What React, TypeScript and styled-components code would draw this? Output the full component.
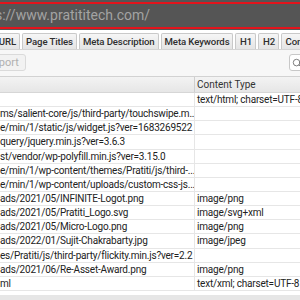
import React from "react";
import styled, { createGlobalStyle } from "styled-components";
import { Search } from "lucide-react";

const GlobalStyle = createGlobalStyle`
  html, body { margin: 0; padding: 0; background: #ffffff; overflow: hidden; }
  * { box-sizing: border-box; }
`;

const Frame = styled.div`
  width: 300px;
  height: 300px;
  overflow: hidden;
  display: flex;
  flex-direction: column;
  font-family: Roboto, "Liberation Sans", Arial, sans-serif;
  background: #ffffff;
`;

const AddressBar = styled.div`
  height: 30px;
  flex: none;
  background: #555555;
  padding: 2px 0 1px;
`;

const AddressInner = styled.div`
  height: 27px;
  border-top: 2px solid #e3141c;
  border-bottom: 2px solid #e3141c;
  color: #a3a3a3;
  font-size: 14px;
  line-height: 23px;
  white-space: nowrap;
  overflow: hidden;
`;

const AddressText = styled.span`
  display: inline-block;
  margin-left: -5px;
`;

const TabStrip = styled.div`
  height: 20px;
  flex: none;
  display: flex;
  align-items: flex-end;
  gap: 2px;
  padding-top: 3px;
  background: #ffffff;
  border-bottom: 1px solid #d4d4d4;
  white-space: nowrap;
`;

const Tab = styled.div<{ $first?: boolean }>`
  height: 16px;
  flex: none;
  min-width: 21px;
  text-align: center;
  ${(p) => (p.$first ? "width: 40px; margin-left: -20px; text-align: right;" : "")}
  padding: 0 3px;
  border: 1px solid #c9c9c9;
  border-bottom: none;
  border-radius: 2px 2px 0 0;
  background: linear-gradient(#f6f6f6, #e4e4e4);
  color: #2e2e2e;
  font-size: 9.6px;
  font-weight: 500;
  letter-spacing: -0.1px;
  line-height: 15px;
`;

const Toolbar = styled.div`
  height: 26px;
  flex: none;
  display: flex;
  align-items: flex-start;
  justify-content: space-between;
  padding-top: 4px;
  background: #f7f7f7;
`;

const ExportButton = styled.div`
  height: 17px;
  margin-left: -20px;
  padding: 0 6px;
  border: 1px solid #dadada;
  border-radius: 3px;
  background: #f2f2f2;
  color: #b0b0b0;
  font-size: 11px;
  line-height: 15px;
`;

const SearchBox = styled.div`
  width: 40px;
  height: 17px;
  margin-right: -29px;
  border: 1px solid #c8c8c8;
  border-radius: 3px;
  background: #ffffff;
  display: flex;
  align-items: center;
  padding-left: 2px;
  color: #666666;
`;

const HeaderRow = styled.div`
  height: 17px;
  flex: none;
  display: grid;
  grid-template-columns: 195px 1fr;
  border-top: 1px solid #d2d2d2;
  border-bottom: 1px solid #d6d6d6;
  background: linear-gradient(#f3f3f3, #e6e6e6);
`;

const HeaderCell = styled.div<{ $divider?: boolean }>`
  color: #333333;
  font-size: 10px;
  line-height: 15px;
  padding-left: 2px;
  border-right: ${(p) => (p.$divider ? "1px solid #cfcfcf" : "none")};
`;

const Row = styled.div`
  height: 14.15px;
  flex: none;
  display: grid;
  grid-template-columns: 195px 1fr;
  border-bottom: 1px solid #e6e6e6;
`;

const Cell = styled.div<{ $divider?: boolean }>`
  overflow: hidden;
  white-space: nowrap;
  color: #222222;
  font-size: 10px;
  letter-spacing: -0.2px;
  line-height: 13px;
  padding-left: ${(p) => (p.$divider ? "0" : "2px")};
  border-right: ${(p) => (p.$divider ? "1px solid #e6e6e6" : "none")};
`;

const BottomBar = styled.div`
  flex: 1;
  margin-top: 4px;
  background: #e6e6e6;
`;

const rows: [string, string][] = [
  ["", "text/html; charset=UTF-8"],
  ["ms/salient-core/js/third-party/touchswipe.m...", ""],
  ["e/min/1/static/js/widget.js?ver=1683269522", ""],
  ["query/jquery.min.js?ver=3.6.3", ""],
  ["st/vendor/wp-polyfill.min.js?ver=3.15.0", ""],
  ["e/min/1/wp-content/themes/Pratiti/js/third-...", ""],
  ["e/min/1/wp-content/uploads/custom-css-js...", ""],
  ["ads/2021/05/INFINITE-Logot.png", "image/png"],
  ["ads/2021/05/Pratiti_Logo.svg", "image/svg+xml"],
  ["ads/2021/05/Micro-Logo.png", "image/png"],
  ["ads/2022/01/Sujit-Chakrabarty.jpg", "image/jpeg"],
  ["es/Pratiti/js/third-party/flickity.min.js?ver=2.2", ""],
  ["ads/2021/06/Re-Asset-Award.png", "image/png"],
  ["ml", "text/xml; charset=UTF-8"],
];

const tabs = ["URL", "Page Titles", "Meta Description", "Meta Keywords", "H1", "H2", "Content"];

export default function App() {
  return (
    <>
      <GlobalStyle />
      <Frame>
        <AddressBar>
          <AddressInner>
            <AddressText>s://www.pratititech.com/</AddressText>
          </AddressInner>
        </AddressBar>
        <TabStrip>
          {tabs.map((t, i) => (
            <Tab key={t} $first={i === 0}>
              {t}
            </Tab>
          ))}
        </TabStrip>
        <Toolbar>
          <ExportButton>Export</ExportButton>
          <SearchBox>
            <Search size={10} strokeWidth={2} />
          </SearchBox>
        </Toolbar>
        <HeaderRow>
          <HeaderCell $divider />
          <HeaderCell>Content Type</HeaderCell>
        </HeaderRow>
        {rows.map(([a, b], i) => (
          <Row key={i}>
            <Cell $divider>{a}</Cell>
            <Cell>{b}</Cell>
          </Row>
        ))}
        <BottomBar />
      </Frame>
    </>
  );
}
